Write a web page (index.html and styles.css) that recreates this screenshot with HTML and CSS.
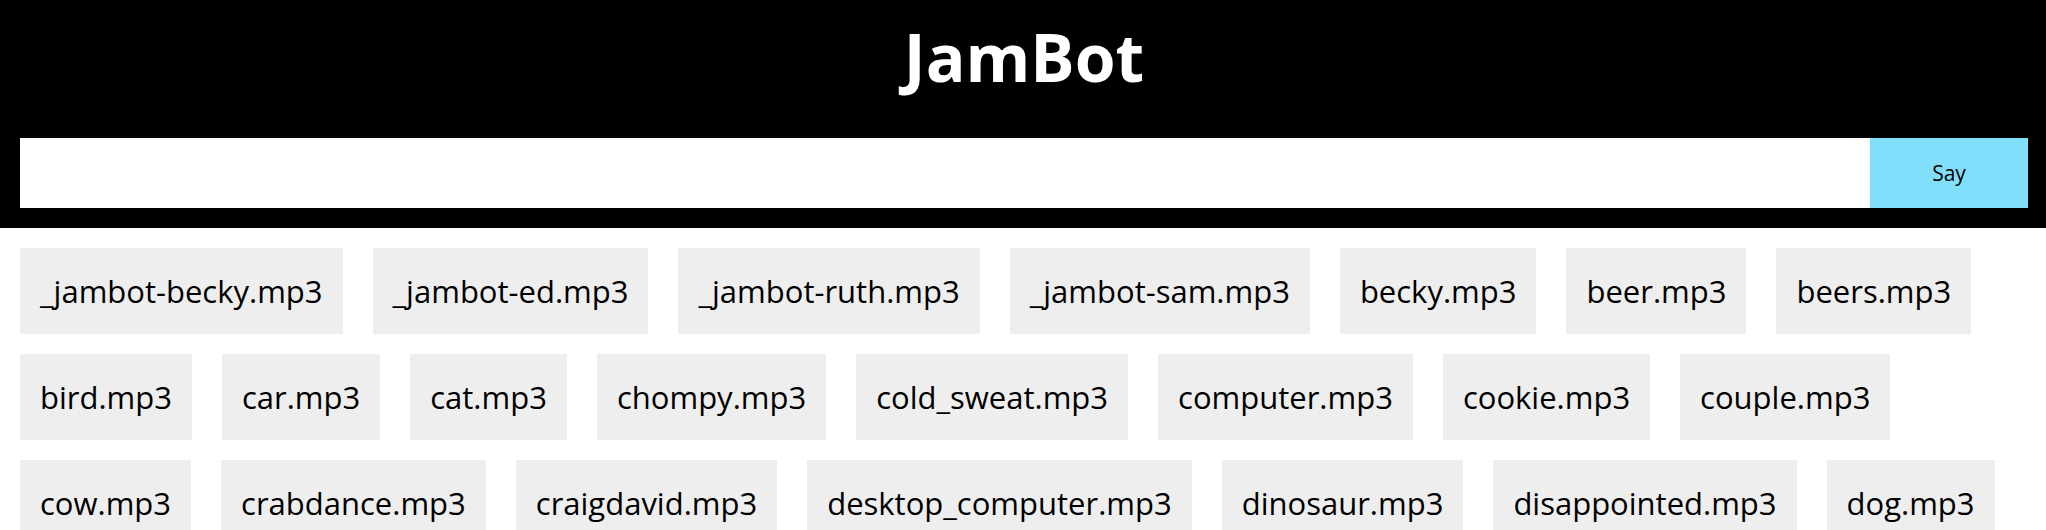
FILE: index.html
```html
<!DOCTYPE html>
<html lang="en">
<head>
<meta charset="utf-8">
<title>JamBot</title>
<link rel="stylesheet" href="styles.css">
</head>
<body>
<header class="top">
  <h1 class="title">JamBot</h1>
  <form class="say-form">
    <input class="say-input" type="text" aria-label="Message">
    <button class="say-btn" type="button">Say</button>
  </form>
</header>
<main class="sounds">
  <button class="sound">_jambot-becky.mp3</button>
  <button class="sound">_jambot-ed.mp3</button>
  <button class="sound">_jambot-ruth.mp3</button>
  <button class="sound">_jambot-sam.mp3</button>
  <button class="sound">becky.mp3</button>
  <button class="sound">beer.mp3</button>
  <button class="sound">beers.mp3</button>
  <button class="sound">bird.mp3</button>
  <button class="sound">car.mp3</button>
  <button class="sound">cat.mp3</button>
  <button class="sound">chompy.mp3</button>
  <button class="sound">cold_sweat.mp3</button>
  <button class="sound">computer.mp3</button>
  <button class="sound">cookie.mp3</button>
  <button class="sound">couple.mp3</button>
  <button class="sound">cow.mp3</button>
  <button class="sound">crabdance.mp3</button>
  <button class="sound">craigdavid.mp3</button>
  <button class="sound">desktop_computer.mp3</button>
  <button class="sound">dinosaur.mp3</button>
  <button class="sound">disappointed.mp3</button>
  <button class="sound">dog.mp3</button>
</main>
</body>
</html>
```
FILE: styles.css
```css
* {
  box-sizing: border-box;
}

body {
  margin: 0;
  background: #fff;
  font-family: "Comic Sans MS", "Open Sans", sans-serif;
  color: #000;
}

.top {
  background: #000;
  padding: 16px 18px 20px 20px;
}

.title {
  margin: 0 0 42px;
  color: #fff;
  text-align: center;
  font-size: 66px;
  line-height: 80px;
  font-weight: 700;
}

.say-form {
  display: flex;
  height: 70px;
  margin: 0;
}

.say-input {
  flex: 1;
  border: none;
  background: #fff;
  margin: 0;
  padding: 0 16px;
  font: inherit;
  font-size: 22px;
  outline: none;
}

.say-btn {
  width: 158px;
  border: none;
  margin: 0;
  background: #82dffc;
  color: #000;
  font-family: inherit;
  font-size: 21px;
  cursor: pointer;
}

.sounds {
  display: flex;
  flex-wrap: wrap;
  gap: 20px 30px;
  padding: 20px;
}

.sound {
  border: none;
  margin: 0;
  background: #eeeeee;
  color: #000;
  font-family: inherit;
  font-size: 31px;
  line-height: 46px;
  padding: 20px;
  cursor: pointer;
}
```
